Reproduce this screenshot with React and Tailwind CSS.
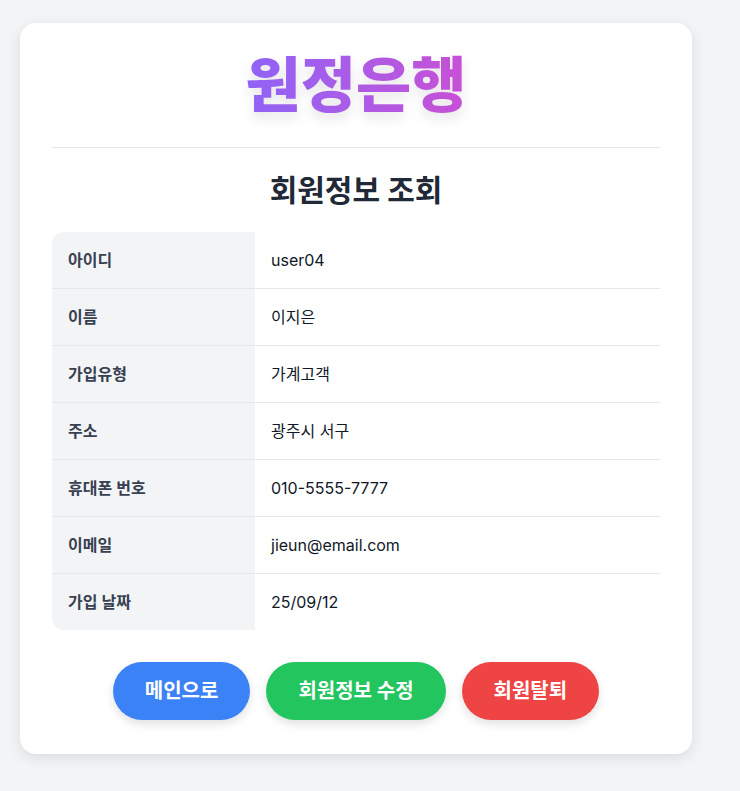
export default function App() {
  const rows = [
    ["아이디", "user04"],
    ["이름", "이지은"],
    ["가입유형", "가계고객"],
    ["주소", "광주시 서구"],
    ["휴대폰 번호", "010-5555-7777"],
    ["이메일", "jieun@email.com"],
    ["가입 날짜", "25/09/12"],
  ];
  return (
    <div
      className="min-h-[791px] bg-[#f3f4f6] px-5 pt-[23px] pb-5"
      style={{ fontFamily: 'Inter, "Noto Sans CJK KR", sans-serif' }}
    >
      <div className="w-[672px] rounded-2xl bg-white px-8 pt-8 pb-[34px] shadow-[0_4px_14px_rgba(0,0,0,0.10)]">
        <div className="border-b border-gray-200 pb-8 text-center">
          <h1 className="inline-block bg-gradient-to-r from-[#8f63f6] to-[#c74fd6] bg-clip-text text-[60px] leading-[60px] font-extrabold text-transparent [filter:drop-shadow(0_6px_6px_rgba(0,0,0,0.10))]">
            원정은행
          </h1>
        </div>
        <h2 className="mt-6 mb-6 text-center text-[30px] leading-[36px] font-bold text-[#1f2937]">
          회원정보 조회
        </h2>
        <div className="overflow-hidden rounded-xl">
          {rows.map(([k, v], i) => (
            <div
              key={k}
              className={`flex ${i < rows.length - 1 ? "h-[57px] border-b border-gray-200" : "h-[56px]"}`}
            >
              <div className="flex w-[203px] items-center bg-[#f3f4f6] px-4 text-[16px] font-semibold text-[#374151]">
                {k}
              </div>
              <div className="flex flex-1 items-center px-4 text-[16px] text-[#111827]">
                {v}
              </div>
            </div>
          ))}
        </div>
        <div className="mt-8 flex justify-center gap-4">
          <button className="h-[58px] rounded-full bg-[#3b82f6] px-8 text-[20px] font-bold text-white shadow-[0_4px_10px_rgba(0,0,0,0.12)]">
            메인으로
          </button>
          <button className="h-[58px] rounded-full bg-[#22c55e] px-8 text-[20px] font-bold text-white shadow-[0_4px_10px_rgba(0,0,0,0.12)]">
            회원정보 수정
          </button>
          <button className="h-[58px] rounded-full bg-[#ef4444] px-8 text-[20px] font-bold text-white shadow-[0_4px_10px_rgba(0,0,0,0.12)]">
            회원탈퇴
          </button>
        </div>
      </div>
    </div>
  );
}
